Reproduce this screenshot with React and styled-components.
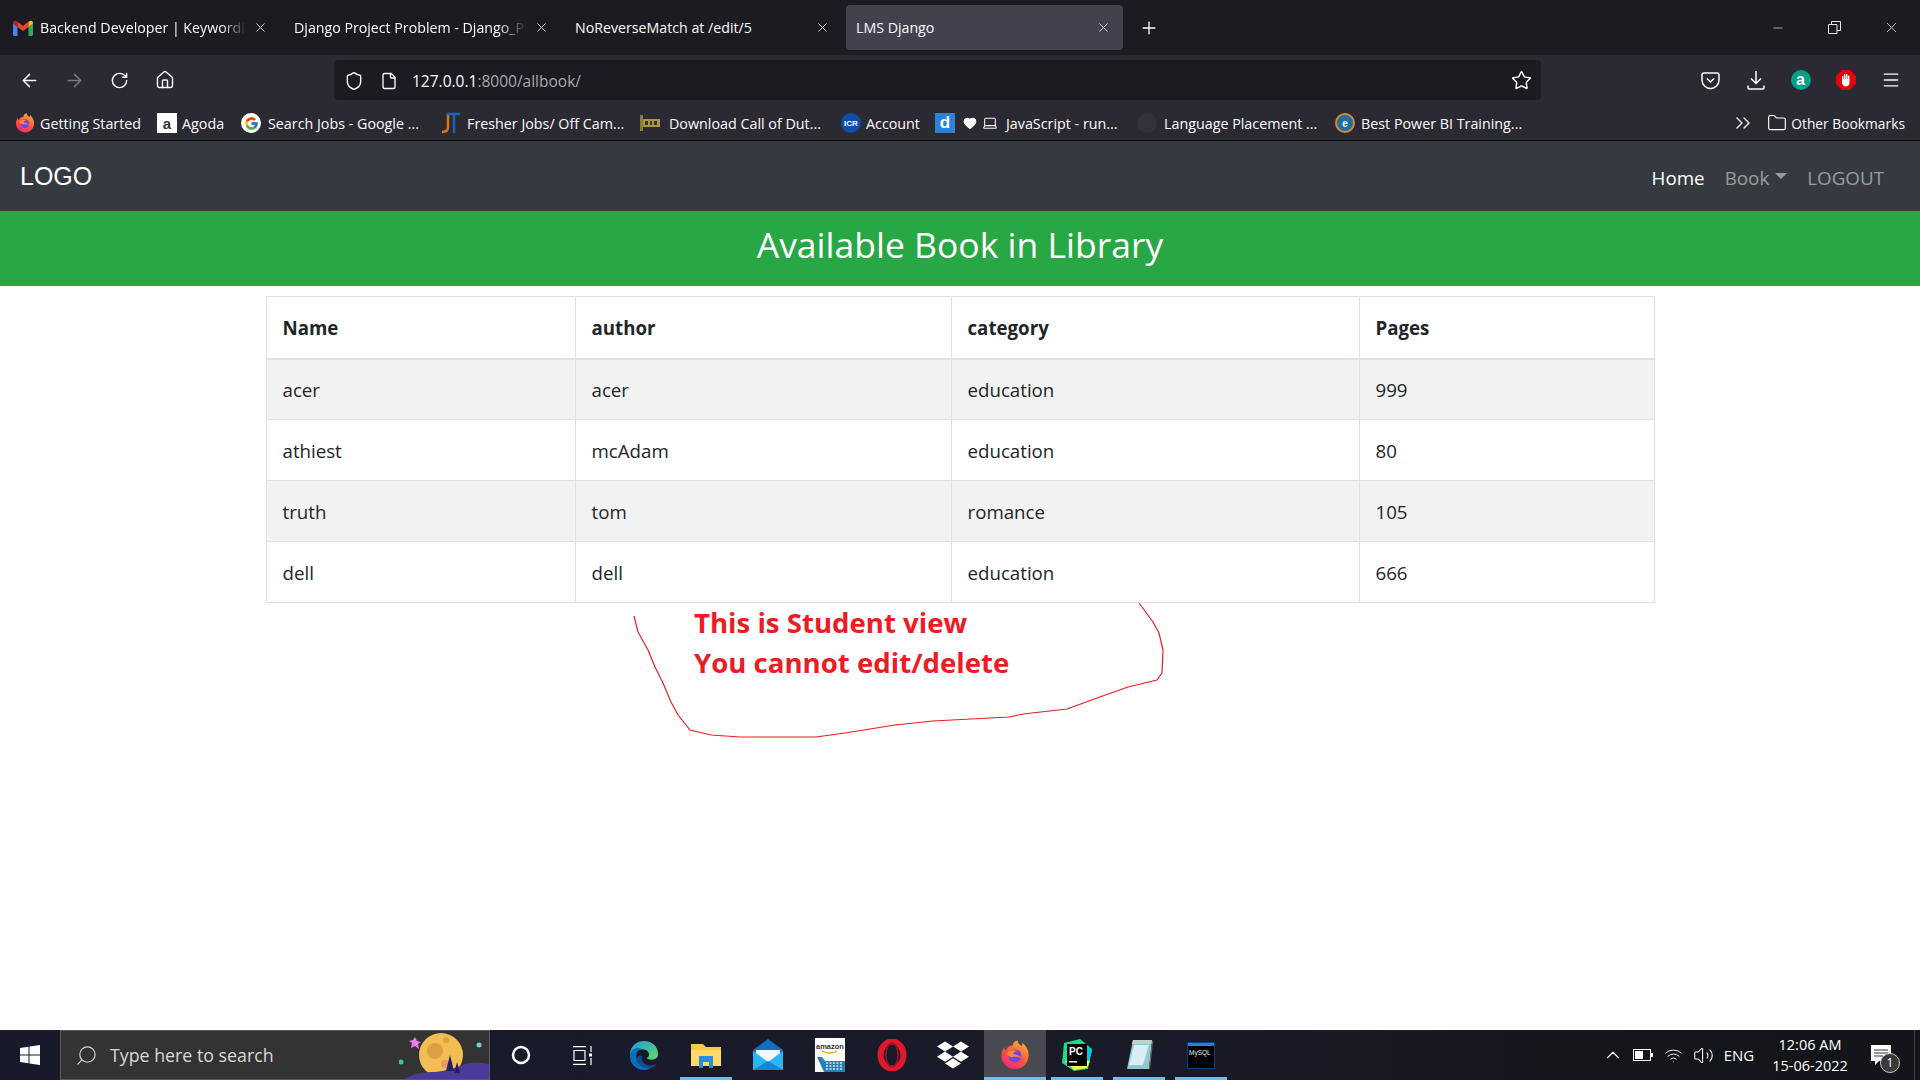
import React from "react";
import styled, { createGlobalStyle } from "styled-components";
import {
  ArrowLeft, ArrowRight, RotateCw, Home, Shield, File, Star, Menu,
  ChevronsRight, Folder, Minus, X, Plus, Search, ChevronUp, Volume2, Wifi, Heart, Laptop,
} from "lucide-react";
import { FcGoogle } from "react-icons/fc";
import { FaDropbox } from "react-icons/fa";

const uiFont = `"Open Sans", "Noto Sans", sans-serif`;

const GlobalStyle = createGlobalStyle`
  html, body { margin: 0; padding: 0; background: #fff; }
  body { font-family: ${uiFont}; overflow: hidden; }
  #root { width: 1920px; height: 1080px; }
`;

const Page = styled.div`
  width: 1920px;
  height: 1080px;
  display: flex;
  flex-direction: column;
`;

/* browser chrome */
const TabStrip = styled.div`
  height: 55px;
  background: #1c1b22;
  display: flex;
  align-items: flex-start;
  padding: 5px 0 0 3px;
  box-sizing: border-box;
  color: #fbfbfe;
`;
const Tab = styled.div`
  width: 277px;
  height: 45px;
  margin-right: 4px;
  padding: 0 12px 0 10px;
  box-sizing: border-box;
  display: flex;
  align-items: center;
  gap: 7px;
  font-size: 14.2px;
  border-radius: 4px;
  background: ${(p) => (p.$active ? "#42414d" : "transparent")};
  svg.close { flex: none; color: #d6d6da; margin-left: auto; }
`;
const TabTitle = styled.span`
  flex: 1;
  min-width: 0;
  white-space: nowrap;
  overflow: hidden;
  -webkit-mask-image: ${(p) =>
    p.$fade ? "linear-gradient(to right, #000 88%, transparent 100%)" : "none"};
`;
const NewTab = styled.div`
  width: 44px;
  height: 45px;
  display: flex;
  align-items: center;
  justify-content: center;
`;
const WindowControls = styled.div`
  margin-left: auto;
  display: flex;
  height: 45px;
  align-items: center;
`;
const WindowButton = styled.div`
  width: 57px;
  display: flex;
  justify-content: center;
  color: #e8e8ea;
`;
const Toolbar = styled.div`
  height: 45px;
  background: #2b2a33;
  display: flex;
  align-items: flex-start;
  padding: 5px 8px 0 7px;
  box-sizing: border-box;
  color: #fbfbfe;
`;
const ToolButton = styled.div`
  width: 45px;
  height: 40px;
  flex: none;
  display: flex;
  align-items: center;
  justify-content: center;
  color: ${(p) => (p.$dim ? "#7c7b83" : "#fbfbfe")};
`;
const UrlBar = styled.div`
  width: 1207px;
  height: 40px;
  margin: 0 147px 0 147px;
  flex: none;
  background: #1c1b22;
  border-radius: 4px;
  display: flex;
  align-items: center;
  padding: 1px 9px 0 10px;
  box-sizing: border-box;
  font-size: 15.5px;
`;
const UrlIcon = styled.span`
  display: flex;
  width: ${(p) => p.$w}px;
  flex: none;
`;
const UrlHost = styled.span`
  color: #fbfbfe;
`;
const UrlPath = styled.span`
  color: #a8a8ad;
`;
const StarSlot = styled.span`
  margin-left: auto;
  display: flex;
`;
const ToolGroup = styled.div`
  display: flex;
`;
const BookmarkBar = styled.div`
  height: 41px;
  background: #2b2a33;
  border-bottom: 1px solid #0c0c0d;
  box-sizing: border-box;
  display: flex;
  align-items: center;
  padding: 6px 0 0 15px;
  font-size: 14.3px;
  color: #fbfbfe;
  white-space: nowrap;
`;
const Bookmark = styled.div`
  width: ${(p) => p.$w}px;
  flex: none;
  display: flex;
  align-items: center;
  gap: ${(p) => p.$gap ?? 5}px;
`;
const Favicon = styled.span`
  width: 20px;
  height: 20px;
  flex: none;
  box-sizing: border-box;
  display: flex;
  align-items: center;
  justify-content: center;
  font-family: "Liberation Sans", sans-serif;
  font-weight: 700;
  color: ${(p) => p.$color || "#fff"};
  background: ${(p) => p.$bg || "transparent"};
  border: ${(p) => (p.$ring ? `2px solid ${p.$ring}` : "none")};
  border-radius: ${(p) => (p.$round ? "50%" : "0")};
  font-size: ${(p) => p.$size || 10}px;
`;
const BookmarkEnd = styled.div`
  margin-left: auto;
  display: flex;
  align-items: center;
  padding-right: 15px;
  gap: 4px;
  font-size: 13.8px;
`;

/* site */
const Navbar = styled.nav`
  height: 70px;
  flex: none;
  background: #343a40;
  display: flex;
  align-items: center;
  justify-content: space-between;
  padding: 0 36px 0 20px;
  box-sizing: border-box;
`;
const Brand = styled.a`
  font-family: "Liberation Sans", sans-serif;
  font-size: 25px;
  color: #fff;
`;
const NavLinks = styled.div`
  display: flex;
  align-items: center;
  gap: 20px;
  padding-top: 4px;
`;
const NavLink = styled.a`
  font-size: 18.8px;
  color: ${(p) => (p.$active ? "#fff" : "rgba(255,255,255,.5)")};
  display: flex;
  align-items: center;
`;
const Caret = styled.span`
  width: 0;
  height: 0;
  margin: 0 0 5px 6px;
  border-top: 6px solid rgba(255, 255, 255, 0.5);
  border-left: 6px solid transparent;
  border-right: 6px solid transparent;
`;
const Banner = styled.h1`
  height: 75px;
  flex: none;
  margin: 0;
  padding-bottom: 9px;
  box-sizing: border-box;
  background: #28a745;
  color: #fff;
  font-size: 35.5px;
  font-weight: 400;
  display: flex;
  align-items: center;
  justify-content: center;
`;
const Main = styled.main`
  flex: 1;
  position: relative;
  background: #fff;
  padding-top: 10px;
`;
const BookTable = styled.table`
  width: 1388px;
  margin: 0 auto;
  border-collapse: collapse;
  table-layout: fixed;
  font-size: 18.7px;
  color: #212529;
`;
const HeadCell = styled.th`
  width: ${(p) => p.$w}px;
  height: 62px;
  box-sizing: border-box;
  padding: 1px 15px 0 16px;
  text-align: left;
  font-weight: 700;
  border: 1px solid #dee2e6;
  border-bottom-width: 2px;
`;
const Row = styled.tr`
  background: ${(p) => (p.$odd ? "#f2f2f2" : "#fff")};
`;
const Cell = styled.td`
  height: 61px;
  box-sizing: border-box;
  padding: 1px 15px 0 16px;
  border: 1px solid #dee2e6;
`;
const Scribble = styled.svg`
  position: absolute;
  left: 0;
  top: 0;
`;
const Note = styled.div`
  position: absolute;
  left: 694px;
  top: 316px;
  color: #ed1c24;
  font-size: 27.6px;
  font-weight: 700;
  line-height: 40px;
`;

/* taskbar */
const Taskbar = styled.div`
  height: 50px;
  flex: none;
  background: linear-gradient(to right, #181a2b, #1a1b28 60%, #15161b 85%, #141519);
  display: flex;
  align-items: stretch;
  color: #fff;
`;
const StartButton = styled.div`
  width: 60px;
  flex: none;
  display: flex;
  align-items: center;
  justify-content: center;
`;
const SearchBox = styled.div`
  width: 430px;
  flex: none;
  box-sizing: border-box;
  background: #333;
  border: 1px solid #5a5a5a;
  display: flex;
  align-items: center;
  padding-left: 14px;
  gap: 12px;
  font-size: 17.8px;
  color: #d8d8d8;
  position: relative;
  overflow: hidden;
`;
const SearchArt = styled.svg`
  position: absolute;
  right: 0;
  top: 0;
`;
const AppSlot = styled.div`
  width: 61.8px;
  flex: none;
  position: relative;
  display: flex;
  align-items: center;
  justify-content: center;
  background: ${(p) => (p.$current ? "#4a4a52" : "transparent")};
  &::after {
    content: "";
    display: ${(p) => (p.$open ? "block" : "none")};
    position: absolute;
    bottom: 0;
    height: 3px;
    left: ${(p) => (p.$current ? 0 : 5)}px;
    right: ${(p) => (p.$current ? 0 : 5)}px;
    background: #76b9ed;
  }
`;
const Tray = styled.div`
  margin-left: auto;
  margin-right: 5px;
  display: flex;
  align-items: center;
  border-right: 1px solid #44454c;
  padding-right: 10px;
`;
const TrayIcon = styled.div`
  width: ${(p) => p.$w || 30}px;
  display: flex;
  justify-content: center;
  font-size: 15px;
`;
const Clock = styled.div`
  width: 96px;
  margin-left: 2px;
  text-align: center;
  font-size: 14.5px;
  line-height: 21px;
`;
const Notification = styled.div`
  width: 46px;
  position: relative;
  display: flex;
  justify-content: center;
`;
const NotifyBadge = styled.span`
  position: absolute;
  left: 22px;
  top: 8px;
  width: 20px;
  height: 20px;
  border-radius: 50%;
  background: #3a3a3a;
  border: 1px solid #c8c8c8;
  box-sizing: border-box;
  font-size: 12px;
  line-height: 18px;
  text-align: center;
`;

/* logos */
const GmailLogo = () => (
  <svg width="20" height="16" viewBox="0 0 20 16">
    <path d="M0 3v11.5A1.5 1.5 0 0 0 1.500 16H4.500V7z" fill="#4285f4" />
    <path d="M20 3v11.5a1.5 1.5 0 0 1-1.500 1.500H15.500V7z" fill="#34a853" />
    <path d="M4.500 7V1.500L10 6l5.500-4.500V7L10 11z" fill="#ea4335" />
    <path d="M0 3a2.200 2.200 0 0 1 4-1.300l.5.400V7L0 3.500z" fill="#c5221f" />
    <path d="M20 3a2.200 2.200 0 0 0-4-1.300l-.5.400V7L20 3.500z" fill="#fbbc04" />
  </svg>
);

const FirefoxLogo = ({ size, id }) => (
  <svg width={size} height={size} viewBox="0 0 32 32">
    <defs>
      <linearGradient id={id} x1="0.8" y1="0" x2="0.2" y2="1">
        <stop offset="0" stopColor="#ffb32c" />
        <stop offset="0.5" stopColor="#ff5a3a" />
        <stop offset="1" stopColor="#f0247a" />
      </linearGradient>
    </defs>
    <path d="M16 31C7.500 31 1.500 24.500 1.500 16.500c0-3 1-6.500 3-8.500 0 1.500.5 3 1.500 3.500C7.500 7.500 11 5.500 14 6c-1-2 1-5 5-5.500-.5 3 2 4 4 6 1-1 1-2.500 1-3.500 4 3.500 6.500 8 6.500 13C30.500 24.500 24.500 31 16 31z" fill={`url(#${id})`} />
    <circle cx="16" cy="17" r="7" fill="#7542e5" />
    <path d="M7 14c3-3 7-4 12-2-3 0-5 1-5 3 3 1 8 1 9 5-3-3-7-2-10-2-3 0-5-2-6-4z" fill="#ff8a2c" />
  </svg>
);

const EdgeLogo = () => (
  <svg width="30" height="30" viewBox="0 0 32 32">
    <defs>
      <linearGradient id="edgeTop" x1="0" y1="0" x2="1" y2="1">
        <stop offset="0" stopColor="#1c9bd8" />
        <stop offset="1" stopColor="#5fdc6d" />
      </linearGradient>
    </defs>
    <path d="M1 15C2 6 8 1 16 1c9 0 15 6 15 14 0 4-3 6-7 6-3 0-5-1-5-2 3-1 3-4 1-7-3-3-9-3-13 0-3 1-5 2-6 3z" fill="url(#edgeTop)" />
    <path d="M1 15c2-5 7-8 12-6-4 2-6 6-5 11 1 5 6 10 14 10 1 0 2 0 3-1-3 2-6 3-9 3C7 32 0 25 1 15z" fill="#0f6cbd" />
    <path d="M8 20c1 6 7 10 14 10 3 0 6-2 8-5-3 2-8 3-12 1-4-2-5-5-4-9-3-1-5 0-6 3z" fill="#0c4f8f" />
  </svg>
);

const FilesLogo = () => (
  <svg width="30" height="26" viewBox="0 0 30 26">
    <path d="M0 2h12l3 3h15v19H0z" fill="#f7c948" />
    <path d="M0 8h30v16H0z" fill="#ffd966" />
    <path d="M8 14h14v12h-4v-6h-6v6H8z" fill="#2a8fd8" />
  </svg>
);

const MailLogo = () => (
  <svg width="30" height="32" viewBox="0 0 30 32">
    <path d="M0 11 15 0l15 11v20H0z" fill="#0d6fc4" />
    <path d="M3 11h24v6L15 23 3 17z" fill="#f5f7fa" />
    <path d="M0 12l15 11 15-11v19H0z" fill="#29b6f6" />
    <path d="M0 31l15-9 15 9z" fill="#0f86d8" />
  </svg>
);

const AmazonLogo = () => (
  <svg width="30" height="34" viewBox="0 0 30 34">
    <rect width="30" height="34" fill="#fff" />
    <text x="15" y="11" textAnchor="middle" fontSize="7.500" fontWeight="700" fill="#333" fontFamily="Liberation Sans, sans-serif">amazon</text>
    <path d="M7 13q8 4 15 0" stroke="#f90" strokeWidth="1.300" fill="none" />
    <path d="M2 19h5l3 4h20v11H9z" fill="#2a7fb8" />
    <path d="M11 25h17M11 28h17M11 31h17" stroke="#d5e8f4" strokeWidth="1.300" strokeDasharray="2 1.500" />
  </svg>
);

const OperaLogo = () => (
  <svg width="30" height="32" viewBox="0 0 30 32">
    <ellipse cx="15" cy="16" rx="11.500" ry="13.500" fill="none" stroke="#e0182d" strokeWidth="6" />
    <ellipse cx="15" cy="16" rx="6" ry="12" fill="none" stroke="#a70f22" strokeWidth="1.500" />
  </svg>
);

const PyCharmLogo = () => (
  <svg width="30" height="32" viewBox="0 0 30 32">
    <path d="M2 4 18 0l12 10-4 20-14 2L0 24z" fill="#21d789" />
    <path d="M22 6l8 6-3 10-4-3z" fill="#07c3f2" />
    <path d="M3 22l9 9 13-2 3-7-14-3z" fill="#fcf84a" />
    <rect x="5" y="5" width="20" height="22" fill="#000" />
    <text x="7" y="16" fontSize="10" fontWeight="700" fill="#fff" fontFamily="Liberation Sans, sans-serif">PC</text>
    <rect x="7" y="22" width="8" height="1.500" fill="#fff" />
  </svg>
);

const NotepadLogo = () => (
  <svg width="28" height="32" viewBox="0 0 28 32">
    <path d="M8 1h19l-3 29H2z" fill="#8fc7d2" />
    <path d="M8 1h19l-.5 4H7z" fill="#c7ccd1" />
    <path d="M9 6h15l-6 20H4z" fill="#d8eef2" />
    <path d="M27 1l1 2-3 27h-1z" fill="#7a6a4a" />
  </svg>
);

const MysqlLogo = () => (
  <svg width="28" height="27" viewBox="0 0 28 27">
    <rect width="28" height="27" fill="#0c3f7e" />
    <rect x="1" y="1" width="26" height="3" fill="#2e7dd6" />
    <rect x="1" y="4" width="26" height="22" fill="#000" />
    <text x="2" y="13" fontSize="6.500" fill="#e8e8e8" fontFamily="Liberation Sans, sans-serif">MySQL</text>
  </svg>
);

const WindowsLogo = () => (
  <svg width="20" height="20" viewBox="0 0 20 20" fill="#fff">
    <path d="M0 3l8.500-1.200v7.700H0zM9.500 1.600 20 0v9.500H9.500zM0 10.500h8.500v7.700L0 17zM9.500 10.500H20V20L9.500 18.400z" />
  </svg>
);

const TaskViewIcon = () => (
  <svg width="19" height="19" viewBox="0 0 19 19" fill="none" stroke="#fff" strokeWidth="1.200">
    <path d="M0 .6h13M0 18.400h13M1 4.500h11v10H1zM18 0v6M18 12v7" />
    <rect x="16" y="7.500" width="3" height="3" fill="#fff" stroke="none" />
  </svg>
);

const MoonArt = () => (
  <SearchArt width="90" height="48" viewBox="0 0 90 48">
    <circle cx="42" cy="24" r="22" fill="#f2bd52" />
    <circle cx="36" cy="20" r="8" fill="#dd9f42" />
    <circle cx="47" cy="9" r="3" fill="#dd9f42" />
    <circle cx="46" cy="33" r="4" fill="#e89a6c" />
    <path d="M6 48q12-8 30-7 15-2 25-6 12-6 29-2v15z" fill="#4b3a9c" />
    <path d="M47 40l4-16 4 16zM55 42l3-11 3 11z" fill="#24205e" />
    <path d="M16 6l2 4 4 1-3 2 1 5-4-3-4 2 1-5-3-2 4-1z" fill="#e87df0" />
    <circle cx="2" cy="31" r="2.500" fill="#38d07a" />
    <circle cx="80" cy="14" r="2.500" fill="#5fd8e8" />
  </SearchArt>
);

const scribble =
  "M634 616 638 632 648 650 655 667 663 683 671 702 678 715 690 730 711 735 740 737 816 737 845 733 895 725 933 721 1009 717 1023 714 1067 709 1097 698 1128 687 1157 680 1162 673 1163 650 1159 633 1153 622 1139 603";

const tabs = [
  { title: "Backend Developer | Keywordio", icon: <GmailLogo />, fade: true },
  { title: "Django Project Problem - Django_Project", fade: true },
  { title: "NoReverseMatch at /edit/5" },
  { title: "LMS Django", active: true },
];

const books = [
  ["acer", "acer", "education", "999"],
  ["athiest", "mcAdam", "education", "80"],
  ["truth", "tom", "romance", "105"],
  ["dell", "dell", "education", "666"],
];

const columns = [
  ["Name", 309],
  ["author", 376],
  ["category", 408],
  ["Pages", 295],
];

function App() {
  return (
    <Page>
      <GlobalStyle />
      <TabStrip>
        {tabs.map((t) => (
          <Tab key={t.title} $active={t.active}>
            {t.icon}
            <TabTitle $fade={t.fade}>{t.title}</TabTitle>
            <X className="close" size={15} strokeWidth={1.5} />
          </Tab>
        ))}
        <NewTab>
          <Plus size={20} strokeWidth={1.6} />
        </NewTab>
        <WindowControls>
          <WindowButton><Minus size={14} strokeWidth={1.2} /></WindowButton>
          <WindowButton>
            <svg width="13" height="13" viewBox="0 0 13 13" fill="none" stroke="currentColor">
              <path d="M.5 3.500h8.500v9H.5zM3.500 3.500v-3h9v9H9" />
            </svg>
          </WindowButton>
          <WindowButton><X size={17} strokeWidth={1.1} /></WindowButton>
        </WindowControls>
      </TabStrip>

      <Toolbar>
        <ToolButton><ArrowLeft size={21} strokeWidth={1.7} /></ToolButton>
        <ToolButton $dim><ArrowRight size={21} strokeWidth={1.7} /></ToolButton>
        <ToolButton><RotateCw size={19} strokeWidth={1.8} /></ToolButton>
        <ToolButton><Home size={20} strokeWidth={1.7} /></ToolButton>
        <UrlBar>
          <UrlIcon $w={36}><Shield size={20} strokeWidth={1.7} /></UrlIcon>
          <UrlIcon $w={32}><File size={18} strokeWidth={1.8} /></UrlIcon>
          <UrlHost>127.0.0.1</UrlHost>
          <UrlPath>:8000/allbook/</UrlPath>
          <StarSlot><Star size={21} strokeWidth={1.7} /></StarSlot>
        </UrlBar>
        <ToolGroup>
          <ToolButton>
            <svg width="19" height="19" viewBox="0 0 19 19" fill="none" stroke="#fbfbfe" strokeWidth="1.500">
              <path d="M1 3.500A1.800 1.800 0 0 1 2.800 2h13.400A1.800 1.800 0 0 1 18 3.500V9a8.500 8.500 0 0 1-17 0z" />
              <path d="M6 7.500 9.500 11 13 7.500" />
            </svg>
          </ToolButton>
          <ToolButton>
            <svg width="18" height="20" viewBox="0 0 18 20" fill="none" stroke="#fbfbfe" strokeWidth="1.500">
              <path d="M9 1v12M4 8.500 9 13.500 14 8.500M1 15.500V18a1 1 0 0 0 1 1h14a1 1 0 0 0 1-1v-2.500" />
            </svg>
          </ToolButton>
          <ToolButton>
            <Favicon $bg="#00a08a" $round $size={16}>a</Favicon>
          </ToolButton>
          <ToolButton>
            <svg width="20" height="20" viewBox="0 0 20 20">
              <path d="M6 0h8l6 6v8l-6 6H6l-6-6V6z" fill="#e3000f" />
              <path d="M6 10V6.500a1 1 0 0 1 1.500 0V9h.5V4.500a1 1 0 0 1 1.500 0V9h.5V4.500a1 1 0 0 1 1.500 0V9h.5V6a1 1 0 0 1 1.500 0v7c0 2-1.500 3.500-3.500 3.500S6.500 15 6 13.500z" fill="#fff" />
            </svg>
          </ToolButton>
          <ToolButton><Menu size={20} strokeWidth={1.6} /></ToolButton>
        </ToolGroup>
      </Toolbar>

      <BookmarkBar>
        <Bookmark $w={142}><FirefoxLogo size={20} id="fxSmall" />Getting Started</Bookmark>
        <Bookmark $w={84}>
          <Favicon $bg="#fff" $size={15} $color="#333">a</Favicon>Agoda
        </Bookmark>
        <Bookmark $w={199} $gap={7}>
          <Favicon $bg="#fff" $round><FcGoogle size={15} /></Favicon>Search Jobs - Google ...
        </Bookmark>
        <Bookmark $w={200} $gap={7}>
          <svg width="20" height="22" viewBox="0 0 20 22" fill="none" strokeWidth="2.500">
            <path d="M8 1v14q0 5-6 5" stroke="#e8710a" />
            <path d="M7 2h13M14 2v19" stroke="#1565c0" />
          </svg>
          Fresher Jobs/ Off Cam...
        </Bookmark>
        <Bookmark $w={201} $gap={9}>
          <svg width="20" height="16" viewBox="0 0 20 16">
            <rect x="0" y="0" width="3" height="16" fill="#8a7a3a" />
            <rect x="3" y="4" width="17" height="8" fill="#a8964c" />
            <path d="M5 6h3v4H5zM10 6h2v4h-2zM14 6h3v4h-3z" fill="#3a3418" />
          </svg>
          Download Call of Dut...
        </Bookmark>
        <Bookmark $w={94}>
          <Favicon $bg="#0d4fa8" $round $size={8}>ICR</Favicon>Account
        </Bookmark>
        <Bookmark $w={28}><Favicon $bg="#2a83d8" $size={17}>d</Favicon></Bookmark>
        <Bookmark $w={19}><Heart size={14} fill="#fff" color="#fff" /></Bookmark>
        <Bookmark $w={24}><Laptop size={16} strokeWidth={1.6} /></Bookmark>
        <Bookmark $w={131}>JavaScript - run...</Bookmark>
        <Bookmark $w={198} $gap={7}>
          <Favicon $bg="#33323a" $round />Language Placement ...
        </Bookmark>
        <Bookmark $w={210} $gap={6}>
          <Favicon $bg="#1e6fa8" $ring="#d98a2b" $round $size={10}>e</Favicon>Best Power BI Training...
        </Bookmark>
        <BookmarkEnd>
          <ChevronsRight size={24} strokeWidth={1.4} style={{ marginRight: 8 }} />
          <Folder size={20} strokeWidth={1.4} />
          Other Bookmarks
        </BookmarkEnd>
      </BookmarkBar>

      <Navbar>
        <Brand>LOGO</Brand>
        <NavLinks>
          <NavLink $active>Home</NavLink>
          <NavLink>Book<Caret /></NavLink>
          <NavLink>LOGOUT</NavLink>
        </NavLinks>
      </Navbar>
      <Banner>Available Book in Library</Banner>

      <Main>
        <BookTable>
          <thead>
            <tr>
              {columns.map(([label, w]) => (
                <HeadCell key={label} $w={w}>{label}</HeadCell>
              ))}
            </tr>
          </thead>
          <tbody>
            {books.map((row, i) => (
              <Row key={row[0]} $odd={i % 2 === 0}>
                {row.map((val, j) => (
                  <Cell key={j}>{val}</Cell>
                ))}
              </Row>
            ))}
          </tbody>
        </BookTable>
        <Scribble width="1920" height="744" viewBox="0 286 1920 744" fill="none">
          <path d={scribble} stroke="#ed1c24" strokeWidth="1.200" strokeLinejoin="round" />
        </Scribble>
        <Note>
          This is Student view
          <br />
          You cannot edit/delete
        </Note>
      </Main>

      <Taskbar>
        <StartButton><WindowsLogo /></StartButton>
        <SearchBox>
          <Search size={23} strokeWidth={1.2} style={{ transform: "scaleX(-1)" }} />
          Type here to search
          <MoonArt />
        </SearchBox>
        <AppSlot>
          <svg width="20" height="20" viewBox="0 0 20 20" fill="none" stroke="#fff" strokeWidth="2.500">
            <circle cx="10" cy="10" r="8" />
          </svg>
        </AppSlot>
        <AppSlot><TaskViewIcon /></AppSlot>
        <AppSlot><EdgeLogo /></AppSlot>
        <AppSlot $open><FilesLogo /></AppSlot>
        <AppSlot><MailLogo /></AppSlot>
        <AppSlot><AmazonLogo /></AppSlot>
        <AppSlot><OperaLogo /></AppSlot>
        <AppSlot><FaDropbox size={32} color="#fff" /></AppSlot>
        <AppSlot $open $current><FirefoxLogo size={30} id="fxLarge" /></AppSlot>
        <AppSlot $open><PyCharmLogo /></AppSlot>
        <AppSlot $open><NotepadLogo /></AppSlot>
        <AppSlot $open><MysqlLogo /></AppSlot>
        <Tray>
          <TrayIcon><ChevronUp size={22} strokeWidth={1.2} /></TrayIcon>
          <TrayIcon>
            <svg width="20" height="12" viewBox="0 0 20 12">
              <rect x=".5" y=".5" width="17" height="11" fill="none" stroke="#fff" />
              <rect x="2" y="2" width="8" height="8" fill="#fff" />
              <rect x="18" y="4" width="2" height="4" fill="#fff" />
            </svg>
          </TrayIcon>
          <TrayIcon><Wifi size={19} strokeWidth={1.2} /></TrayIcon>
          <TrayIcon><Volume2 size={21} strokeWidth={1.2} /></TrayIcon>
          <TrayIcon $w={42}>ENG</TrayIcon>
          <Clock>
            12:06 AM
            <br />
            15-06-2022
          </Clock>
          <Notification>
            <svg width="20" height="20" viewBox="0 0 20 20">
              <path d="M0 0h20v16H8l-4 4v-4H0z" fill="#fff" />
              <path d="M3 5h14M3 8h14M3 11h9" stroke="#333" />
            </svg>
            <NotifyBadge>1</NotifyBadge>
          </Notification>
        </Tray>
      </Taskbar>
    </Page>
  );
}

export default App;
